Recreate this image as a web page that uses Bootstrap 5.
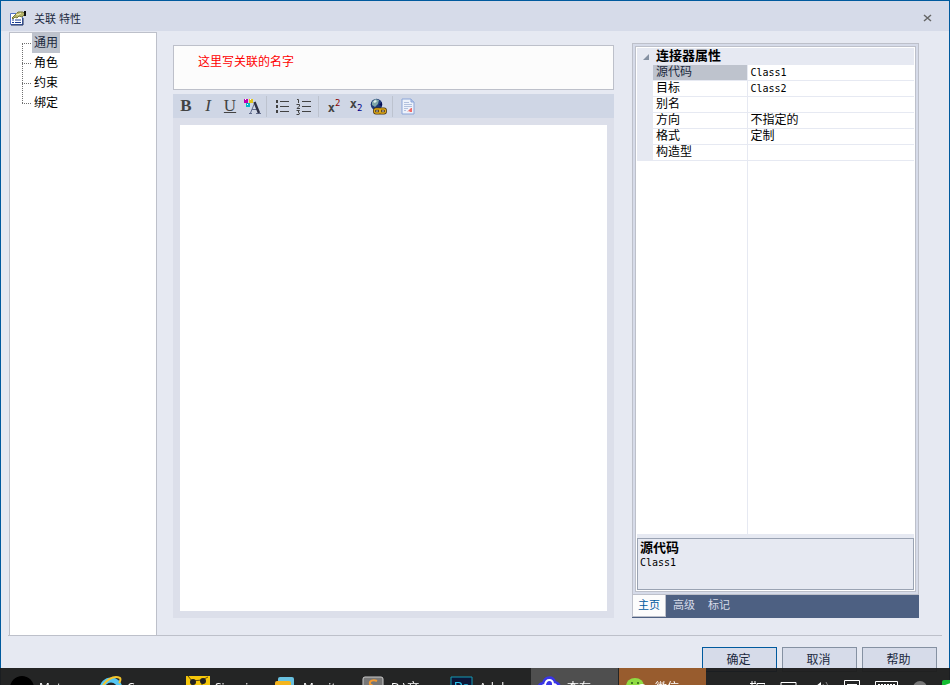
<!DOCTYPE html>
<html lang="zh-CN">
<head>
<meta charset="utf-8">
<meta name="viewport" content="width=device-width, initial-scale=1">
<title>关联 特性</title>
<link href="https://cdn.jsdelivr.net/npm/bootstrap@5.3.0/dist/css/bootstrap.min.css" rel="stylesheet">
<style>
:root { --line:#bdc0ca; --face:#e6e9f2; --bar:#d6dbe9; --ink:#1b293e; --accent:#005a9e; }
body { font:12px/16px "Liberation Sans","Noto Sans CJK SC",sans-serif; color:#000; background:var(--face); }
button { font:inherit; color:inherit; background:none; border:0; padding:0; }
svg { display:block; flex:none; }
.dialog { border:1px solid var(--accent); border-bottom:0; }
.titlebar { height:30px; background:var(--bar); color:var(--ink); font-size:11px; padding:6px 17px 0 9px; }
.titlebar h1 { font-size:11px; line-height:16px; margin:0 0 0 7px; font-weight:400; }
.titlebar svg { margin-bottom:2px; }
.content { margin:1px 7px 0; border-bottom:1px solid var(--line); }
.tree { width:148px; margin-left:1px; border:1px solid var(--line); border-bottom:0; padding-left:12px; }
.tree li { height:20px; position:relative; padding-left:10px; }
.tree li::before { content:""; position:absolute; left:0; top:10px; width:9px; border-top:1px dotted #707070; }
.tree li:not(:last-child)::after { content:""; position:absolute; left:0; top:10px; height:20px; border-left:1px dotted #707070; }
.tree a { display:inline-block; line-height:20px; padding:0 2px; color:#000; text-decoration:none; }
.tree a.current { background:#bec3cd; color:var(--ink); }
.editor { margin:13px 18px 17px 16px; }
.assoc-name { height:45px; border:1px solid var(--line); border-radius:0; background:#fcfcfc; color:red; padding:0 24px 15px; font-size:12px; outline:0; }
.toolstrip { height:24px; margin-top:4px; padding-left:2px; background:#cfd6e5; }
.toolstrip button { width:22px; height:24px; display:flex; align-items:center; justify-content:center; color:#424242; font-family:"Liberation Serif",serif; font-size:17px; line-height:20px; }
.toolstrip .script-btn { font:bold 12px/14px "DejaVu Sans Mono",monospace; }
.script-btn.raised { padding-top:3px; }
.script-btn.lowered { padding-bottom:4px; }
.script-btn sup, .script-btn sub { font-size:9px; font-weight:400; line-height:1; }
.script-btn sup { color:#8b0000; top:-4px; }
.script-btn sub { color:#00008b; bottom:-4px; }
.divider { width:1px; height:21px; margin:0 4px 0 3px; background:#bdc3cf; }
.note-wrap { background:#dcdfea; padding:7px; }
.note-wrap textarea { border:0; resize:none; outline:0; background:#fff; }
.inspector { width:287px; margin:11px 23px 17px 0; }
.grid-frame { border:1px solid var(--line); background:var(--bar); padding:2px; }
.grid-inner { border:1px solid var(--line); background:#fff; padding:1px; }
.props { table-layout:fixed; border-collapse:collapse; }
.props th, .props td { height:16px; line-height:15px; padding:0 3px; border-bottom:1px solid var(--face); white-space:nowrap; font-weight:400; }
.props thead th { background:var(--face); font-weight:700; font-size:13px; }
.props .gutter { width:16px; background:var(--face); padding:0; }
.props tbody th, .grid-rest div { border-right:1px solid var(--face); }
.props .chosen { background:#bec3cd; color:var(--ink); }
.twist { width:0; height:0; margin:3px 0 0 6px; border-left:6px solid transparent; border-bottom:6px solid #8591a2; }
.latin { font:10px/15px "DejaVu Sans Mono",monospace; }
.grid-rest div { width:111px; }
.describe { border-top:4px solid var(--face); }
.describe > div { border:1px solid #9aa3b3; background:var(--face); padding:1px 2px; height:52px; }
.describe b { font-size:13px; line-height:15px; }
.tabstrip { height:23px; background:#4d6082; color:#d6dbe9; font-size:11px; }
.tabstrip button { width:35px; padding:0 0 3px 6px; text-align:left; white-space:nowrap; }
.tabstrip button.current { width:34px; background:#fcfcfc; color:var(--accent); border:1px solid var(--line); border-top:0; margin:0 1px 1px 0; padding:0 0 1px 5px; }
.actions { height:49px; padding:11px 12px 0; gap:5px; }
.actions button { width:75px; height:25px; padding-right:2px; border:1px solid #8591a2; background:var(--bar); color:var(--ink); }
.actions button.main-action { border-color:var(--accent); }
.taskbar { height:17px; padding-left:3px; gap:1px; overflow:hidden; background:rgba(28,28,28,.96); color:#fff; font:12px/16px "Open Sans","Noto Sans CJK SC",sans-serif; }
.task { width:87px; height:40px; padding:0 0 0 6px; gap:5px; overflow:hidden; white-space:nowrap; }
.task.open { background:#4f4f4f; }
.task.alert-task { background:#985c2e; }
.tray { height:40px; flex:none; padding-left:12px; gap:15px; }
</style>
</head>
<body>
<div class="dialog vh-100 d-flex flex-column overflow-hidden">
  <header class="titlebar d-flex align-items-center">
    <svg width="17" height="16" viewBox="0 0 17 16"><path d="M.5 3.5h12v11H.5z" fill="#fff" stroke="#5271c8"/><path d="M1 15h12V8" fill="none" stroke="#172d58"/><path d="M2 10h2m1 0h6M2 12.500h2m1 0h6" stroke="#183b91"/><path d="M2 8l4-4 2-2h5l2 2-3 3-3-1-2 2-2-1-2 2z" fill="#b5b36a" stroke="#77763b"/><path d="M6 4l2 1 3-2" fill="none" stroke="#fff5b0"/><path d="M14 1h2v5h-2z" fill="#111"/></svg>
    <h1>关联 特性</h1>
    <button class="ms-auto" type="button" aria-label="关闭"><svg width="9" height="8" viewBox="0 0 9 8"><path d="M1 1l7 6M8 1L1 7" stroke="#666" stroke-width="1.500"/></svg></button>
  </header>

  <main class="content d-flex flex-grow-1">
    <nav class="tree bg-white flex-shrink-0">
      <ul class="list-unstyled mb-0">
        <li><a href="#general" class="current">通用</a></li>
        <li><a href="#role">角色</a></li>
        <li><a href="#constraint">约束</a></li>
        <li><a href="#binding">绑定</a></li>
      </ul>
    </nav>

    <section class="editor d-flex flex-column flex-grow-1">
      <input class="assoc-name w-100" type="text" aria-label="名称" value="这里写关联的名字">
      <div class="toolstrip d-flex align-items-center" role="toolbar">
        <button type="button"><b>B</b></button>
        <button type="button"><i>I</i></button>
        <button type="button"><u>U</u></button>
        <button type="button" aria-label="字体颜色"><svg width="17" height="17" viewBox="0 0 17 17"><path d="M0 1h4v4H0z" fill="#c000b0"/><path d="M1 1h1v1H1z" fill="#fff"/><path d="M5 1h4v4H5z" fill="#e2c51a"/><path d="M6 1h1v1H6z" fill="#fff"/><path d="M2 5h4v4H2z" fill="#00b9c9"/><path d="M3 6h1v1H3z" fill="#fff"/><path d="M5 15.500h3M12 15.500h5M6.500 15L11 4M8 11.500h5" fill="none" stroke="#616b8c"/><path d="M10.500 4l4.500 11" stroke="#2e3147" stroke-width="2.400"/></svg></button>
        <span class="divider"></span>
        <button type="button" aria-label="项目符号"><svg width="15" height="15" viewBox="0 0 15 15"><path d="M1 1h2v3H1zM1 6h2v3H1zM1 11h2v3H1z" fill="#424242"/><path d="M5 2.500h9M5 7.500h9M5 12.500h9" stroke="#424242"/></svg></button>
        <button type="button" aria-label="编号"><svg width="16" height="17" viewBox="0 0 16 17"><path d="M1 1.500h1.500V5M.5 6.500h3V8L1 10.500h3M.5 12.500h3L2 14l1.500 1-.5 1.500H.5" fill="none" stroke="#424242"/><path d="M6 3.500h9M6 8.500h9M6 13.500h9" stroke="#424242"/></svg></button>
        <span class="divider"></span>
        <button type="button" class="script-btn raised">x<sup>2</sup></button>
        <button type="button" class="script-btn lowered">x<sub>2</sub></button>
        <button type="button" aria-label="超链接"><svg width="17" height="17" viewBox="0 0 17 17"><circle cx="6.500" cy="6.500" r="5.800" fill="#1e3877"/><path d="M2 4l3-3 4 1-1 4-3 3-3-2z" fill="#7fa6a9"/><path d="M3 4l2-2 2 1-2 2z" fill="#e1eeee"/><path d="M9 7l3-3v4z" fill="#050b55"/><rect x="4.500" y="11" width="6" height="4" rx="1.500" fill="none" stroke="#4b3510" stroke-width="2.800"/><rect x="9.500" y="11" width="6" height="4" rx="1.500" fill="none" stroke="#4b3510" stroke-width="2.800"/><rect x="4.500" y="11" width="6" height="4" rx="1.500" fill="none" stroke="#e2aa16" stroke-width="1.300"/><rect x="9.500" y="11" width="6" height="4" rx="1.500" fill="none" stroke="#e2aa16" stroke-width="1.300"/></svg></button>
        <span class="divider"></span>
        <button type="button" aria-label="文档"><svg width="14" height="17" viewBox="0 0 14 17"><path d="M1 1h9l3 3v12H1z" fill="#edf2fb" stroke="#8ba5d8"/><path d="M10 1v3h3" fill="#b7caec" stroke="#8ba5d8"/><path d="M3 4.500h5M3 6.500h8M3 8.500h8M3 10.500h4M3 12.500h2" stroke="#b2c1de"/><path d="M6 14l4-4h1v4H9l-1-1z" fill="#ef6b69"/></svg></button>
      </div>
      <div class="note-wrap d-flex flex-grow-1"><textarea class="flex-grow-1" aria-label="注释"></textarea></div>
    </section>

    <aside class="inspector d-flex flex-column flex-shrink-0">
      <div class="grid-frame d-flex flex-column flex-grow-1">
        <div class="grid-inner d-flex flex-column flex-grow-1">
          <table class="props w-100">
            <colgroup><col style="width:16px"><col style="width:94px"><col></colgroup>
            <thead><tr><th class="gutter"><div class="twist"></div></th><th colspan="2">连接器属性</th></tr></thead>
            <tbody>
              <tr><td class="gutter"></td><th class="chosen">源代码</th><td><span class="latin">Class1</span></td></tr>
              <tr><td class="gutter"></td><th>目标</th><td><span class="latin">Class2</span></td></tr>
              <tr><td class="gutter"></td><th>别名</th><td></td></tr>
              <tr><td class="gutter"></td><th>方向</th><td>不指定的</td></tr>
              <tr><td class="gutter"></td><th>格式</th><td>定制</td></tr>
              <tr><td class="gutter"></td><th>构造型</th><td></td></tr>
            </tbody>
          </table>
          <div class="grid-rest d-flex flex-grow-1"><div></div></div>
          <div class="describe"><div><b class="d-block">源代码</b><span class="latin d-block">Class1</span></div></div>
        </div>
      </div>
      <div class="tabstrip d-flex" role="tablist">
        <button type="button" role="tab" class="current" aria-selected="true">主页</button>
        <button type="button" role="tab">高级</button>
        <button type="button" role="tab">标记</button>
      </div>
    </aside>
  </main>

  <footer class="actions d-flex justify-content-end flex-shrink-0">
    <button type="button" class="main-action">确定</button>
    <button type="button">取消</button>
    <button type="button">帮助</button>
  </footer>
</div>

<nav class="taskbar fixed-bottom d-flex align-items-start">
  <button class="task d-flex align-items-center flex-shrink-0" type="button"><svg width="25" height="24" viewBox="0 0 25 24"><circle cx="13" cy="12" r="12" fill="#000"/></svg>Mot</button>
  <button class="task d-flex align-items-center flex-shrink-0" type="button"><svg width="25" height="24" viewBox="0 0 25 24"><circle cx="14" cy="13" r="9" fill="none" stroke="#55c7f3" stroke-width="5"/><path d="M4 14C7 4 17-1 23 2c1 1 0 4-1 5" fill="none" stroke="#f4c52c" stroke-width="2"/></svg>C</button>
  <button class="task d-flex align-items-center flex-shrink-0" type="button"><svg width="25" height="24" viewBox="0 0 25 24"><path d="M1 0h24v24H1z" fill="#f6c70a"/><path d="M3 0l4 5 10-1 6-3M7 5v9M17 4v9" fill="none" stroke="#624e0c"/><circle cx="8" cy="6" r="3" fill="#222"/><circle cx="18" cy="5" r="3" fill="#222"/></svg>Sinovi</button>
  <button class="task d-flex align-items-center flex-shrink-0" type="button"><svg width="25" height="24" viewBox="0 0 25 24"><rect x="5" y="1" width="16" height="17" rx="2" fill="#69c1e0"/><rect x="2" y="5" width="16" height="17" rx="2" fill="#f5b51d"/><path d="M6 9h8v8H6z" fill="#fff"/></svg>Monit</button>
  <button class="task d-flex align-items-center flex-shrink-0" type="button"><svg width="25" height="24" viewBox="0 0 25 24"><rect x="2" y="1" width="20" height="22" rx="2" fill="#777" stroke="#ccc"/><path d="M16 5c-4-2-8 0-7 3l6 4c3 4-2 6-6 4" fill="none" stroke="#f49b31" stroke-width="2"/></svg>D:\文</button>
  <button class="task d-flex align-items-center flex-shrink-0" type="button"><svg width="25" height="24" viewBox="0 0 25 24"><path d="M2 1h21v22H2z" fill="#0b1638" stroke="#159bb5"/><text x="5" y="15" fill="#28c3ed" font-size="13" font-family="Liberation Sans,sans-serif">Ps</text></svg>Adob</button>
  <button class="task open d-flex align-items-center flex-shrink-0" type="button"><svg width="25" height="24" viewBox="0 0 25 24"><path d="M1 16c-1-5 1-9 5-9 2-8 11-7 12-1 5 1 6 5 4 10" fill="#3a35e8" stroke="#3a35e8" stroke-width="2"/><path d="M5 15c-1-4 0-6 3-6 1-7 8-6 8-1 4 0 5 3 3 8" fill="none" stroke="#fff" stroke-width="2"/></svg>查有</button>
  <button class="task alert-task d-flex align-items-center flex-shrink-0" type="button"><svg width="25" height="24" viewBox="0 0 25 24"><ellipse cx="10" cy="10" rx="9" ry="8" fill="#8fdc43"/><circle cx="7" cy="7" r="1" fill="#2c5b18"/><circle cx="13" cy="7" r="1" fill="#2c5b18"/><ellipse cx="17" cy="14" rx="6" ry="6" fill="#fff"/></svg>微信</button>
  <div class="tray d-flex align-items-center">
    <svg width="14" height="16" viewBox="0 0 14 16"><path d="M2 10l5-5 5 5" fill="none" stroke="#aaa"/></svg>
    <svg width="17" height="16" viewBox="0 0 17 16"><path d="M4 1v14M7 1v3M2 3.500h6M9 3.500h8v10H9z" fill="none" stroke="#fff"/></svg>
    <svg width="17" height="16" viewBox="0 0 17 16"><path d="M1 2.500h15v11H1z" fill="none" stroke="#fff"/><path d="M2 5.500h4v3H2z" fill="none" stroke="#fff"/></svg>
    <svg width="17" height="16" viewBox="0 0 17 16"><path d="M1 6h3l5-4v12l-5-4H1z" fill="#fff"/><path d="M11 4q3 4 0 8M14 2q4 6 0 12" fill="none" stroke="#888"/></svg>
    <svg width="16" height="18" viewBox="0 0 16 18"><path d="M.5 1.500h15v13H10l-2 3v-3H.500zM3 5.500h10M3 8.500h10" fill="none" stroke="#fff"/></svg>
    <svg width="23" height="16" viewBox="0 0 23 16"><path d="M.5 1.500h22v12H.500z" fill="none" stroke="#fff"/><path d="M3 4.500h17M3 7.500h17" stroke="#fff" stroke-dasharray="2 1"/></svg>
    <svg width="14" height="16" viewBox="0 0 14 16"><circle cx="7" cy="8" r="7" fill="#777"/><circle cx="4" cy="6" r="1" fill="#222"/><circle cx="10" cy="6" r="1" fill="#222"/></svg>
    <svg width="16" height="16" viewBox="0 0 16 16"><rect width="16" height="16" rx="2" fill="#14bd32"/><path d="M3 5l6-2-2 6" fill="#fff"/></svg>
  </div>
</nav>
<script src="https://cdn.jsdelivr.net/npm/bootstrap@5.3.0/dist/js/bootstrap.bundle.min.js"></script>
</body>
</html>
